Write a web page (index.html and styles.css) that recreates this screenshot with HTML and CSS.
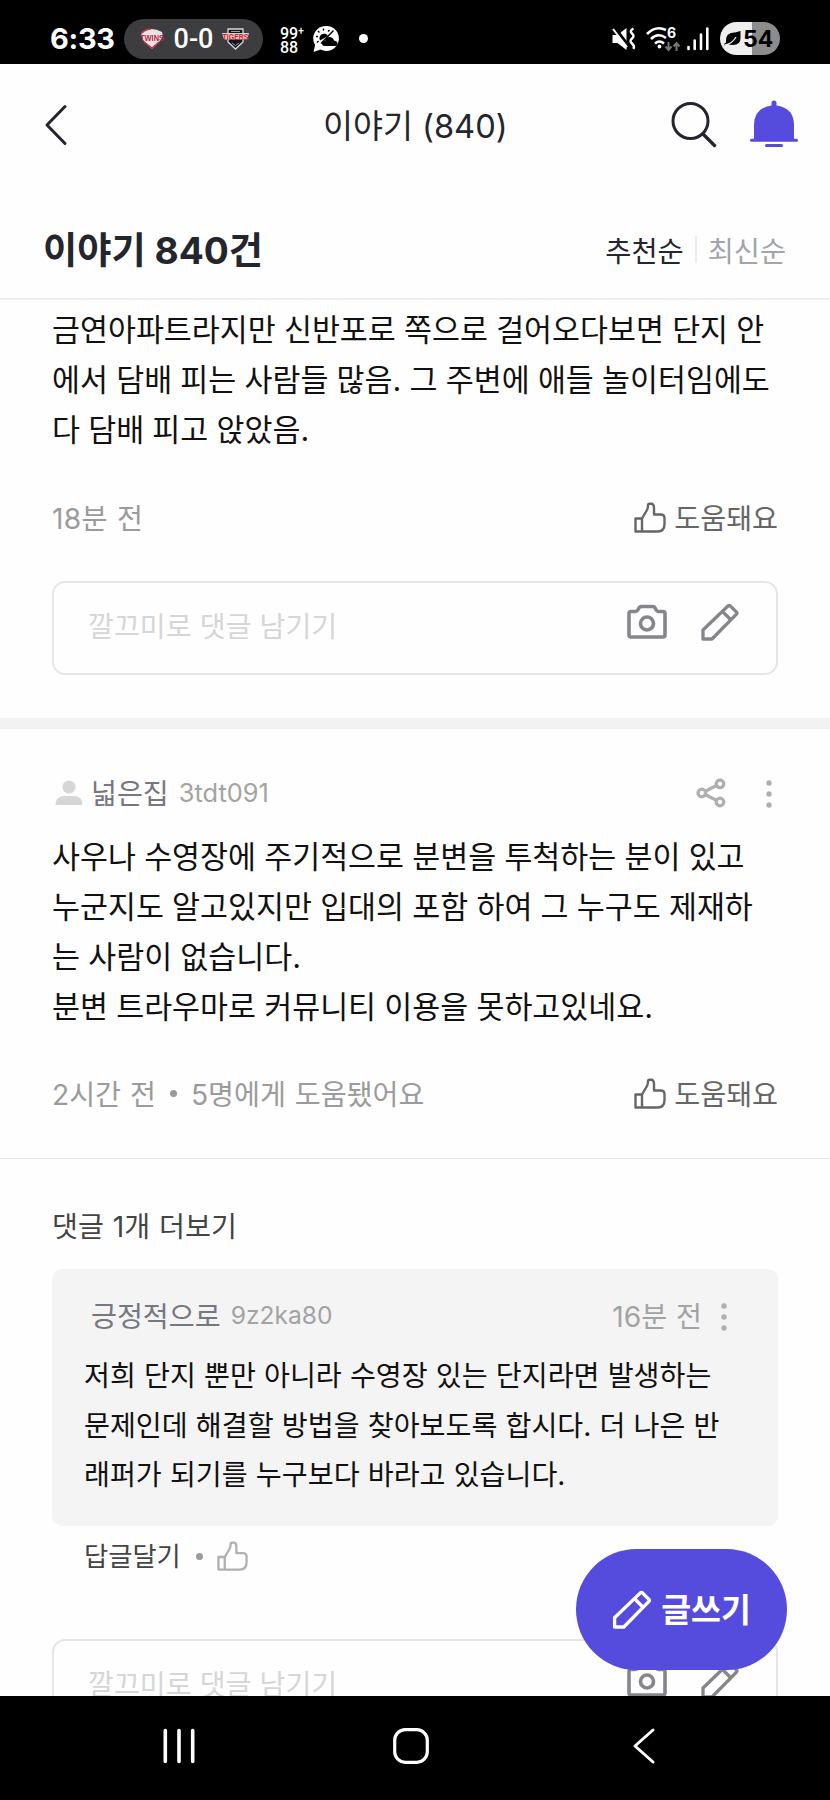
FILE: index.html
```html
<!DOCTYPE html>
<html lang="ko">
<head>
<meta charset="utf-8">
<title>이야기</title>
<link rel="stylesheet" href="styles.css">
</head>
<body>
<svg width="0" height="0" class="defs">
  <defs>
    <symbol id="thumb" viewBox="0 0 32 32"><path d="M1.500 16.500h6.500v13H1.500zM8 16.500l5-8.500q1-2 1-4.500 0-1.800 1.500-1.800h1.500q3 0 3 4.300v6.500h6.500q4 0 4 3.500v6q0 7.500-7 7.500H8" fill="none" stroke="currentColor" stroke-width="2.400" stroke-linejoin="round"/></symbol>
    <symbol id="camera" viewBox="0 0 40 36"><path d="M4 7.500h4.500q1.500 0 2.300-1.500l1.200-2.200q.7-1.300 2.200-1.300h11.600q1.500 0 2.200 1.300L29.200 6q.8 1.500 2.300 1.500H36q2 0 2 2V31q0 2-2 2H4q-2 0-2-2V9.500q0-2 2-2z" fill="none" stroke="currentColor" stroke-width="3.600"/><circle cx="20" cy="19.500" r="6.500" fill="none" stroke="currentColor" stroke-width="3.600"/></symbol>
    <symbol id="pencil" viewBox="0 0 38 38"><path d="M2 36v-9L27.200 2.800q1-.9 2 0l6.300 6.300q.9 1 0 2L11 36zM21.500 8.500l8 8" fill="none" stroke="currentColor" stroke-width="3.300" stroke-linejoin="round"/></symbol>
    <symbol id="dots" viewBox="0 0 6 28"><circle cx="3" cy="3" r="2.700" fill="currentColor"/><circle cx="3" cy="14" r="2.700" fill="currentColor"/><circle cx="3" cy="25" r="2.700" fill="currentColor"/></symbol>
  </defs>
</svg>
<div class="phone">
  <div class="status">
    <span class="clock">6:33</span>
    <div class="score">
      <svg class="team" width="26" height="22" viewBox="0 0 26 22"><path d="M3 4Q12-2 23 4q2 5-3 10l-7 7-7-7Q1 9 3 4z" fill="#e9e1e4"/><path d="M3 5q4-4 9-4M5 14l8 6 7-6" stroke="#c8324e" stroke-width="1.500" fill="none"/><text x="13" y="13" class="team-name" textLength="24" lengthAdjust="spacingAndGlyphs" fill="#bd2448">TWINS</text></svg>
      <span class="goals">0-0</span>
      <svg class="team" width="27" height="22" viewBox="0 0 27 22"><path d="M6 1h15v13l-7.500 7L6 14z" fill="#14181c" stroke="#d8dadc" stroke-width="1.300"/><path d="M9 3.500h9M10 15l3.500 2.500L17 15" stroke="#9a9c9e" fill="none"/><path d="M0 5h27l-2 6.500H2z" fill="#e0cfd1"/><text x="13.500" y="11.500" class="team-name" textLength="26" lengthAdjust="spacingAndGlyphs" fill="#d21f2c">TIGERS</text></svg>
    </div>
    <div class="badge99"><span>99<small>+</small></span><span>88</span></div>
    <svg class="weather" width="27" height="28" viewBox="0 0 27 28"><path d="M13.500 1a12.500 12.500 0 1 1-6 23.500L.5 27l1.600-7A12.500 12.500 0 0 1 13.500 1z" fill="#fff"/><path d="M7 15.500a4.500 4.500 0 1 1 8-4.500z" fill="#000"/><path d="M10.500 3.500v2M5 6l1.500 1.500M3 11.500h2M16.500 5L15 6.500M4 17.500L5.500 16M8 18.500L20.500 5.500" stroke="#000" stroke-width="1.400" fill="none"/><path d="M12 21q-3 0-3-2.500T12 16q1-4 4.500-4t4.500 3.500q3.500.5 3.500 3T22 21z" fill="#000"/></svg>
    <i class="dot-big"></i>
    <div class="sys">
      <svg width="24" height="24" viewBox="0 0 24 24"><path d="M.5 8h5l9-7v22l-9-7h-5z" fill="#fff"/><path d="M2 0l16 21" stroke="#000" stroke-width="3.500"/><path d="M1 2l14 18" stroke="#fff" stroke-width="2"/><path d="M21.500 1.500q-4.500 2.500-1.500 5t0 5 0 5 1.500 5.500" stroke="#fff" stroke-width="2.400" fill="none"/></svg>
      <svg width="34" height="26" viewBox="0 0 34 26"><g fill="none" stroke="#fff" stroke-width="2.600"><path d="M1 8Q10-1 20 4M5 13q7-7 15-1M9 17.500q4.500-4 9 0"/></g><circle cx="13.500" cy="20.500" r="1.900" fill="#fff"/><text x="21" y="12" class="wifi6">6</text><path d="M22.500 16v8m-3-3.500l3 3.500 3-3.500M30.500 25v-8m-3 3.500l3-3.500 3 3.500" stroke="#777" stroke-width="2" fill="none"/></svg>
      <svg class="signal" width="22" height="24" viewBox="0 0 22 24"><path d="M1.500 20v2M7.700 13.500v8.500M14 7.500V22M20.300 1.500V22" stroke="#fff" stroke-width="2.600" stroke-linecap="round"/></svg>
      <div class="battery"><svg width="17" height="15" viewBox="0 0 17 15"><path d="M16.500 0v7q0 7-7.500 7-3.500 0-5-1L1 14.500 0 13l2-1.500Q1 1 11 1.500z" fill="#000"/><path d="M1 14q7-1 11-8" stroke="#eee" stroke-width="1.300" fill="none"/></svg><span>54</span></div>
    </div>
  </div>

  <header class="appbar">
    <svg class="back" width="24" height="42" viewBox="0 0 24 42"><path d="M21 2.500L3 21l18 18.500" fill="none" stroke="#23262d" stroke-width="3" stroke-linecap="round" stroke-linejoin="round"/></svg>
    <h1>이야기 (840)</h1>
    <svg class="search" width="46" height="46" viewBox="0 0 46 46"><circle cx="19.500" cy="19" r="17.500" fill="none" stroke="#23262d" stroke-width="3"/><path d="M32 32l11.500 11.500" stroke="#23262d" stroke-width="3.400" stroke-linecap="round"/></svg>
    <svg class="bell" width="48" height="48" viewBox="0 0 48 48"><path d="M4 39V25Q4 8 21.500 5.500V3a2.500 2.500 0 0 1 5 0v2.500Q44 8 44 25v14z" fill="#554bdc"/><path d="M1.500 40.200h45M16.500 45.600h15" stroke="#554bdc" stroke-width="3" stroke-linecap="round"/></svg>
  </header>

  <div class="listhead">
    <h2>이야기 840건</h2>
    <div class="sort"><span class="on">추천순</span><i></i><span>최신순</span></div>
  </div>

  <main>
    <article class="post first">
      <p class="body">금연아파트라지만 신반포로 쪽으로 걸어오다보면 단지 안<br>에서 담배 피는 사람들 많음. 그 주변에 애들 놀이터임에도<br>다 담배 피고 앉았음.</p>
      <div class="meta"><span class="time">18분 전</span><span class="like"><svg width="32" height="32"><use href="#thumb"/></svg>도움돼요</span></div>
      <div class="comment"><span>깔끄미로 댓글 남기기</span><svg width="40" height="36"><use href="#camera"/></svg><svg class="pen" width="38" height="38"><use href="#pencil"/></svg></div>
    </article>

    <article class="post second">
      <div class="author">
        <svg class="avatar" width="28" height="26" viewBox="0 0 28 26"><circle cx="14" cy="7" r="6.600" fill="#d6d6d6"/><path d="M.5 25q0-9 9-9h9q9 0 9 9z" fill="#d6d6d6"/></svg>
        <b>넓은집</b><em>3tdt091</em>
        <svg class="share" width="30" height="30" viewBox="0 0 30 30"><g fill="none" stroke="#b0b0b0" stroke-width="3.300"><circle cx="5.800" cy="15" r="3.800"/><circle cx="24" cy="5.800" r="3.800"/><circle cx="24" cy="24" r="3.800"/><path d="M9.300 13.200l11.200-5.700M9.300 16.800l11.200 5.500"/></g></svg>
        <svg class="more" width="6" height="28"><use href="#dots"/></svg>
      </div>
      <p class="body">사우나 수영장에 주기적으로 분변을 투척하는 분이 있고<br>누군지도 알고있지만 입대의 포함 하여 그 누구도 제재하<br>는 사람이 없습니다.<br>분변 트라우마로 커뮤니티 이용을 못하고있네요.</p>
      <div class="meta"><span class="time">2시간 전</span><i class="bullet"></i><span class="time">5명에게 도움됐어요</span><span class="like"><svg width="32" height="32"><use href="#thumb"/></svg>도움돼요</span></div>
    </article>

    <section class="replies">
      <div class="morelink">댓글 1개 더보기</div>
      <div class="card">
        <div class="author"><b>긍정적으로</b><em>9z2ka80</em><span class="time">16분 전</span><svg class="more" width="6" height="28"><use href="#dots"/></svg></div>
        <p class="body">저희 단지 뿐만 아니라 수영장 있는 단지라면 발생하는<br>문제인데 해결할 방법을 찾아보도록 합시다. 더 나은 반<br>래퍼가 되기를 누구보다 바라고 있습니다.</p>
      </div>
      <div class="actions"><span>답글달기</span><i class="bullet"></i><svg width="31" height="31"><use href="#thumb"/></svg></div>
      <div class="comment"><span>깔끄미로 댓글 남기기</span><svg width="40" height="36"><use href="#camera"/></svg><svg class="pen" width="38" height="38"><use href="#pencil"/></svg></div>
    </section>
  </main>

  <button class="fab"><svg width="40" height="39" viewBox="0 0 38 38"><use href="#pencil"/></svg><span>글쓰기</span></button>

  <nav>
    <svg width="32" height="36" viewBox="0 0 32 36"><path d="M2.300 2.500v31M16 2.500v31M29.700 2.500v31" stroke="#fff" stroke-width="3.600" stroke-linecap="round"/></svg>
    <svg class="home" width="36" height="36" viewBox="0 0 36 36"><rect x="1.700" y="1.700" width="32.600" height="32.600" rx="10.500" fill="none" stroke="#fff" stroke-width="3.200"/></svg>
    <svg width="24" height="36" viewBox="0 0 24 36"><path d="M21 2L3 18l18 16" fill="none" stroke="#fff" stroke-width="3" stroke-linecap="round" stroke-linejoin="round"/></svg>
  </nav>
</div>
</body>
</html>
```

FILE: styles.css
```css
* { box-sizing: border-box; margin: 0; padding: 0; }
body {
  width: 830px; height: 1800px; overflow: hidden; background: #fefefe;
  font-family: Inter, "Noto Sans CJK KR", sans-serif; font-size: 28.2px; color: #23262d;
}
.defs { position: absolute; }
svg { display: block; flex: none; overflow: visible; }
i { display: block; flex: none; }
.phone { position: relative; width: 830px; height: 1800px; display: flex; flex-direction: column; white-space: nowrap; }

.status { flex: none; height: 64px; background: #000; color: #fff; display: flex; align-items: center; padding: 13px 50px 0 50px; }
.clock { font-size: 29px; font-weight: 700; width: 74px; line-height: 50px; letter-spacing: -0.3px; }
.score { width: 139px; height: 40px; border-radius: 20px; background: #3d3d3f; display: flex; align-items: center; padding: 0 14px 0 15px; justify-content: space-between; }
.team-name { font: 900 9px "Liberation Sans", sans-serif; text-anchor: middle; }
.goals { font: 500 27px Roboto, sans-serif; }
.badge99 { margin: 4px 0 0 17px; width: 24px; font: 500 16px/14px Roboto, sans-serif; display: flex; flex-direction: column; }
.badge99 span { display: flex; height: 14px; }
.badge99 small { font-size: 10px; line-height: 8px; }
.weather { margin-left: 9px; }
.dot-big { width: 9px; height: 9px; border-radius: 50%; background: #fff; margin-left: 19px; }
.sys { margin-left: auto; display: flex; align-items: center; }
.sys > svg + svg { margin-left: 10px; }
.sys > svg.signal { margin-left: 7px; }
.wifi6 { font: 700 14px Inter, sans-serif; fill: #fff; }
.battery { margin-left: 11px; width: 60px; height: 33px; border-radius: 17px; background: linear-gradient(90deg, #eee 54%, #8c8c8c 54%); display: flex; align-items: center; padding-left: 4px; color: #000; font-size: 23px; line-height: 28px; font-weight: 700; gap: 2px; }

.appbar { flex: none; height: 122px; display: flex; align-items: center; padding: 0 32px 0 44px; }
.appbar h1 { font-size: 32.6px; font-weight: 400; line-height: 48px; margin: 2px 0 0 255px; }
.search { margin-left: auto; }
.bell { margin: -2px 0 0 33px; }

.listhead { flex: none; height: 114px; border-bottom: 2px solid #efeff0; display: flex; align-items: center; justify-content: space-between; padding: 15px 44px 0 43px; }
.listhead h2 { font-size: 37.2px; font-weight: 700; margin-top: -4px; }
.sort { display: flex; align-items: center; color: #a3a5a8; font-size: 28.4px; }
.sort i { width: 2px; height: 27px; background: #ececec; margin: 0 11px; }
.sort .on { color: #23262d; }

main { flex: 1; min-height: 0; overflow: hidden; }
.body { font-size: 30.4px; line-height: 50px; color: #111; word-spacing: -0.3px; }
.post { padding: 0 52px; }
.first { padding-top: 5px; height: 418px; }
.meta { display: flex; align-items: center; height: 40px; color: #9b9b9b; word-spacing: 1px; }
.first .meta { margin-top: 41px; }
.first .time { letter-spacing: 0.3px; }
.like { margin-left: auto; display: flex; align-items: center; gap: 8px; color: #666; }
.like svg { margin-top: 4px; }
.comment { height: 94px; border: 2px solid #e6e6e6; border-radius: 13px; display: flex; align-items: center; padding: 0 37px 0 34px; color: #d6d6d6; }
.comment span { margin-top: -7px; }
.comment svg { margin-left: auto; margin-top: -12px; color: #85858c; }
.comment svg.pen { margin-left: 34px; }
.first .comment { margin-top: 45px; }
.second { border-top: 11px solid #f2f2f2; padding-top: 43px; height: 441px; border-bottom: 1px solid #e6e6e6; }
.author { display: flex; align-items: center; height: 42px; color: #b0b0b0; }
.author b { font-weight: 400; color: #777780; margin-top: -3px; }
.author em { font-style: normal; font-size: 25.4px; color: #a3a3a3; margin: -2px 0 0 10px; }
.avatar { margin: 0 8px 0 3px; }
.share { margin-left: auto; }
.second .more { margin: 2px 6px 0 40px; }
.second .body { margin-top: 18px; }
.second .meta { margin-top: 40px; }
.bullet { width: 7px; height: 7px; border-radius: 50%; background: #9b9b9b; margin: 2px 14px 0; }

.replies { padding: 48px 52px 0; }
.morelink { height: 40px; line-height: 40px; color: #444; word-spacing: 1px; }
.card { margin-top: 22px; height: 257px; border-radius: 10px; background: #f4f4f4; padding: 26px 46px 0 32px; }
.card .author { padding-left: 7px; }
.card .author em { font-size: 24.6px; }
.card .time { margin: -3px 0 0 auto; color: #a3a3a3; word-spacing: 1px; }
.card .more { margin: 2px 5px 0 19px; }
.card .body { font-size: 28.2px; line-height: 49.7px; margin-top: 15px; word-spacing: 0.2px; }
.actions { height: 60px; display: flex; align-items: center; padding-left: 32px; color: #444; font-size: 26.3px; }
.actions span { margin-top: -4px; }
.actions .bullet { margin: 0 14px 0 15px; }
.actions svg { color: #b0b0b0; }
.replies .comment { margin-top: 53px; }

.fab { position: absolute; left: 576px; top: 1549px; width: 211px; height: 121px; border: 0; border-radius: 61px; background: #554bdc; color: #fff; font: 700 32.5px Inter, "Noto Sans CJK KR", sans-serif; display: flex; align-items: center; justify-content: center; gap: 9px; }
.fab span { margin-top: -5px; }
nav { position: relative; flex: none; height: 104px; background: #000; display: flex; align-items: center; padding: 0 174px 4px 163px; justify-content: space-between; }
.home { margin-right: 6px; }
```
